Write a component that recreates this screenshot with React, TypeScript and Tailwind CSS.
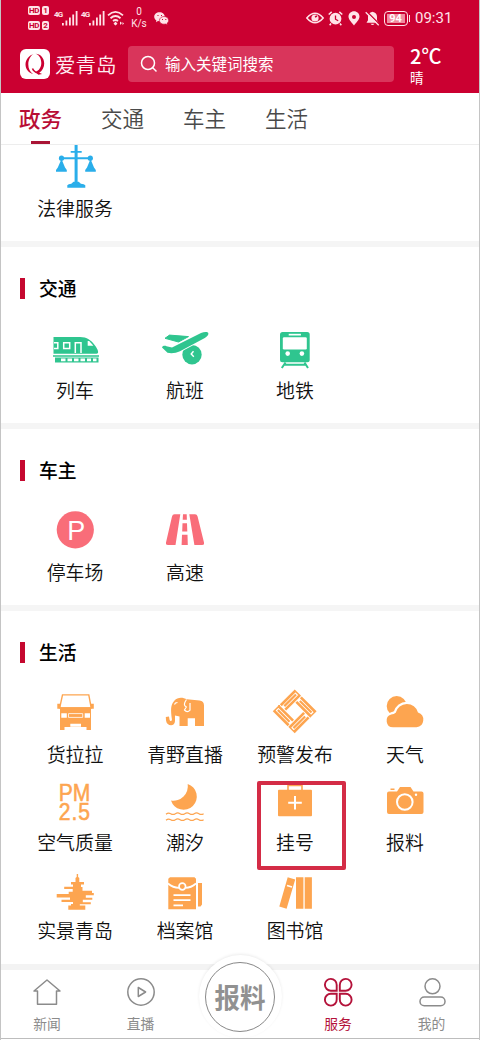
import type { ReactNode } from "react"

const icons: Record<string, ReactNode> = {
  law: (
    <g fill="#2aaeea">
      <path d="M21.600 0h3v38h-3zM17.700 6h11v1.800h-11zM8 12.200h29.500v2H8z" />
      <circle cx="8.500" cy="13.200" r="2.600" />
      <circle cx="37.300" cy="13.200" r="2.600" />
      <path d="M8.500 14l3.500 8.500 1.800 2.500v1.700H3V25l1.800-2.500zM37.500 14l3.500 8.500 1.800 2.500v1.700H32.200V25l1.800-2.500z" />
      <path d="M14.300 42.700v-2.500q1-1.500 4-1.500l2.200-2h5.200l2.200 2q3.400 0 4.400 1.500v2.500z" />
    </g>
  ),
  train: (
    <>
      <path d="M0.500 10H27c7 0 11 3 15 8.500 3 4 4.500 8.200 1.500 8.200H0.500z" fill="#2fc58f" />
      <path d="M34.700 14h1.500l4.200 4.800h-5.700z" fill="#fff" />
      <g fill="none" stroke="#fff" strokeWidth="1.500">
        <path d="M1 15.700h3.800v5.700H1M10.700 15.700h6v5.700h-6zM22.300 26v-10.200h5.700V26" />
      </g>
      <path d="M0 28.300h46v1.500H0zM2 30.500h43.500v5H2z" fill="#2fc58f" />
      <path d="M8 31.500h4.500v2.700H8zM14.500 31.500H19v2.700h-4.500zM21 31.500h4.500v2.700H21zM27.500 31.500H32v2.700h-4.500zM34 31.500h4v2.700h-4zM40 31.500h3.500v2.700H40z" fill="#fff" />
    </>
  ),
  plane: (
    <>
      <path d="M2 11.300l4.500-3.200 19 1.500-10 5.400z" fill="#2fc58f" strokeLinejoin="round" stroke="#2fc58f" />
      <circle cx="29" cy="27.700" r="9.700" fill="#2fc58f" />
      <path d="M30.500 24.300L28.200 27l2.600 2.700" fill="none" stroke="#fff" strokeWidth="1.400" />
      <path d="M-1 20.500c1-2 3-1.800 4.500-1.300l5.500 1.200L38 6c3-1.300 6.500-1.500 7.300 0 .6 1.500-1 3.500-3.500 5L17 24.200c-4 2-9 2.500-12.500 1.500z" fill="#2fc58f" stroke="#fff" strokeWidth="2" paintOrder="stroke" />
    </>
  ),
  metro: (
    <>
      <rect x="7" y="5" width="29.700" height="30.300" rx="2.500" fill="#2fc58f" />
      <path d="M15.700 6.800h12.200v1.700H15.700z" fill="#fff" />
      <rect x="9.800" y="10.300" width="24" height="12.200" rx="1.300" fill="#fff" />
      <circle cx="14.700" cy="26.600" r="2.300" fill="#fff" />
      <circle cx="28.900" cy="26.600" r="2.300" fill="#fff" />
      <path d="M12.500 35.500L8.800 41M31.500 35.500l3.500 5.500M11.500 37.800h21" stroke="#2fc58f" strokeWidth="2" />
    </>
  ),
  parking: (
    <>
      <circle cx="22.300" cy="20.800" r="18.600" fill="#f96d79" />
      <text className="font-['Liberation_Sans',sans-serif] text-[27px]" x="23.200" y="31" textAnchor="middle" fill="#fff">P</text>
    </>
  ),
  road: (
    <g fill="#f96d79">
      <path d="M11.500 5.300h5.800L12.500 36H5q-2.500 0-2-2.500L9 7.500q.5-2.200 2.500-2.200zM26.300 5.300h5.700q2 0 2.600 2.200L41 33.500q.5 2.500-1.800 2.500h-7.800zM20 5.300h3.700l.2 5.500h-4.200zM19.500 14.200h4.500l.3 8.300h-5.100zM19 25.800h5.500l.3 10.200h-6.200z" />
    </g>
  ),
  truck: (
    <>
      <path d="M9.500 3.900h26.300l2.400 13H6.700z" fill="none" stroke="#fda550" strokeWidth="1.400" />
      <path d="M4.300 12.700h3v5h-3zM37.800 12.700h3v5h-3zM7 16.300h31V39h-4.500v-3H11.500v3H7z" fill="#fda550" />
      <path d="M8.300 22.300h5.500v4.400H8.300zM31.700 22.300H37v4.400h-5.300zM17.300 32.700H28v3H17.300z" fill="#fff" />
      <path d="M15.500 22.600h14.200v3.800H15.500z" fill="none" stroke="#fff" strokeWidth=".8" />
    </>
  ),
  elephant: (
    <>
      <path d="M11.500 9.500C14.500 6 19.500 6 24 8.300l12.500 1.200q4.500.4 4.500 5V35h-9v-7.700h-7.300V35H16.500v-9.500l-4.500-1v5.500c0 6-8.500 5.500-9-.8l-.2-3.300 3.200-.5.5 3.200c.4 2.200 2.600 1.800 2.400-.3C7.800 19 7.300 14 11.500 9.500z" fill="#fda550" />
      <path d="M23.500 8.500c-2.800 4-2.800 6-.2 7.500l-1.800 3q2.700 3.200 5.500.2V12" fill="none" stroke="#fff" strokeWidth="1.200" />
      <path d="M11.500 13.500q.5-2 3-2" fill="none" stroke="#fff" strokeWidth="1.100" />
    </>
  ),
  alert: (
    <g transform="rotate(45 21.700 20.300)" fill="#fda550">
      {[0, 90, 180, 270].map((r) => (
        <path key={r} transform={`rotate(${r} 21.700 20.300)`} d="M16.200 4.800h21v2.700h-21zM18 8.200h16.500v2.200H18zM16.200 11.200h21v2.600h-21zM35.700 4.800h1.500v8.800h-1.500z" />
      ))}
    </g>
  ),
  cloud: (
    <>
      <circle cx="13.700" cy="15" r="10" fill="#fda550" />
      <path d="M10 36.300a6.500 6.500 0 0 1-1.800-12.700q2.800-.3 4.500-1.800a11.500 11.500 0 0 1 22.300-.3 7.600 7.600 0 0 1-1.500 14.800z" fill="#fda550" stroke="#fff" strokeWidth="4.500" paintOrder="stroke" />
    </>
  ),
  pm: (
    <g transform="translate(1.500 0) scale(0.960 1.120)" fill="#fda550">
      <text className="font-['Liberation_Sans',sans-serif] text-[22px]" stroke="#fda550" strokeWidth="0.500">
        <tspan x="4.300" y="19.500">PM</tspan>
        <tspan x="4.500" y="36.800" letterSpacing="1">2.5</tspan>
      </text>
    </g>
  ),
  tide: (
    <>
      <path d="M24.700 5A13.200 13.200 0 1 1 8 21.500 14.500 14.500 0 0 0 24.700 5z" fill="#fda550" />
      <path d="M3 35.200q2.300-2 4.700-.5t4.700 0 4.700 0 4.700 0 4.700 0 4.700 0 4.700 0 4.700 0M3 41.200q2.300-2 4.700-.5t4.700 0 4.700 0 4.700 0 4.700 0 4.700 0 4.700 0 4.700 0" fill="none" stroke="#fda550" strokeWidth="1.200" />
    </>
  ),
  medkit: (
    <>
      <path d="M15 11V6.500h14V11" fill="none" stroke="#fda550" strokeWidth="1.600" />
      <rect x="5" y="10.700" width="34" height="26.500" rx="1" fill="#fda550" />
      <path d="M22 17v13.500M15.200 23.800h13.600" stroke="#fff" strokeWidth="2" />
    </>
  ),
  camera: (
    <>
      <path d="M6 12.500h8l3-4.500h10.500l3 4.500h8q2 0 2 2V33q0 2-2 2H6q-2 0-2-2V14.500q0-2 2-2zM7.500 9.400h4v1.500h-4z" fill="#fda550" />
      <circle cx="21.800" cy="23" r="7.800" fill="none" stroke="#fff" strokeWidth="2" />
      <circle cx="33" cy="15.800" r="1.200" fill="#fff" />
    </>
  ),
  tower: (
    <path d="M23.700 7h1.400v3l1.200 1v4h4.700v2.500h-3v2.500h1.500v3.800h9.500v2.200h1.800v2.300h-8v2.500h6.500v2h-9.500v2.500h8v2h-11v1.200h5.500v4.300H15.300v-4.300H18v-1.500h2v-2H8.500v-2.300H17v-2.200H3.700V27h12v-2.300h4V22h-8.500v-2.300H20v-2.200h-2V15h4.500v-4l1.200-1z" fill="#fda550" />
  ),
  archive: (
    <>
      <path d="M7 10.300h24.500l1.500 1.500v30.500H5.300V11.800zM35 16h4v21.500L37.500 39.500H35z" fill="#fda550" />
      <path d="M5 16.500q5 4.300 11 4.300M33 16.500q-5 4.300-10.500 4.300" fill="none" stroke="#fff" strokeWidth="1.700" />
      <circle cx="19.300" cy="19.500" r="3.300" fill="#fda550" stroke="#fff" strokeWidth="1.700" />
      <path d="M10.500 28.200h17M10.500 33.200h17M10.500 38.300h9.500" stroke="#fff" strokeWidth="1.700" />
    </>
  ),
  books: (
    <>
      <path d="M14.700 10.300l7.500 2.300-8.600 29.200-7.300-2.200zM23 10.300h7.400v31.500H23zM31.700 10.300h7.200v31.500h-7.200z" fill="#fda550" />
      <path d="M14 18.500l5 1.500" stroke="#fff" strokeWidth="1.800" />
    </>
  ),
}

const tabs = ["政务", "交通", "车主", "生活"]

function Item({ icon, label }: { icon: string; label: string }) {
  return (
    <div className="flex flex-col items-center">
      <svg className="h-11 w-11 overflow-visible" viewBox="0 0 44 44">{icons[icon]}</svg>
      <span className="mt-[5px] mb-px h-7 text-[18.900px] leading-7 font-[350] whitespace-nowrap text-[#111]">{label}</span>
    </div>
  )
}

function SectionTitle({ title }: { title: string }) {
  return (
    <h2 className="flex h-7 items-center gap-3.5 text-[18.800px] font-medium text-black">
      <span className="-mt-0.5 h-[21px] w-[5px] bg-[#c5082f]" />
      <span className="-mt-px">{title}</span>
    </h2>
  )
}

function Section({ title, children }: { title: string; children: ReactNode }) {
  return (
    <section className="h-[182px] shrink-0 border-b-[6px] border-[#f5f5f5] px-[19px] pt-7">
      <SectionTitle title={title} />
      <div className="mt-6 grid grid-cols-4">{children}</div>
    </section>
  )
}

function Signal() {
  return (
    <div className="flex items-start">
      <span className="w-[8px] text-[8px] leading-[7px] font-bold tracking-[-0.800px]">4G</span>
      <svg className="h-[15px] w-4" viewBox="0 0 16 15" fill="currentColor">
        <path d="M0 12h1.800v2.500H0zM3.500 9.500h1.800v5H3.500zM7 6.500h1.800v8H7zM10.300 3.500h1.800v11h-1.800zM13.700 0h1.800v14.500h-1.800z" />
      </svg>
    </div>
  )
}

function StatusBar() {
  return (
    <div className="flex h-9 items-center pl-[27px] text-[#ffe3e8]">
      <div className="flex flex-col gap-1.5">
        {["1", "2"].map((n) => (
          <div key={n} className="flex gap-0.5 text-[8px] leading-[9px] font-bold text-[#cb0031]">
            <span className="w-3 rounded-xs bg-[#ffe3e8] text-center tracking-tighter">HD</span>
            <span className="w-[7px] rounded-xs bg-[#ffe3e8] text-center">{n}</span>
          </div>
        ))}
      </div>
      <div className="ml-[5px] flex gap-[3px]">
        <Signal />
        <Signal />
      </div>
      <svg className="ml-[2px] h-4 w-[18px]" viewBox="0 0 18 16" fill="none" stroke="currentColor" strokeWidth="1.800">
        <path d="M1 5.300Q8.500-1.500 16 5.300M3.500 8.200q5-4.300 10 0M6 11q2.500-2 5 0" />
        <path d="M8.500 11.500l2 2.300-2 1.700-2-1.700zM13 11.500l2 1.500-2 2zM15.500 12l1.500 1.500-1.500 1.500z" fill="currentColor" stroke="none" />
      </svg>
      <div className="ml-[6px] w-4 text-center text-[10px] leading-3">
        <div>0</div>
        <div className="-mx-1">K/s</div>
      </div>
      <svg className="ml-[7px] h-[13px] w-[15px]" viewBox="0 0 15 13">
        <path d="M5.500.3c3 0 5.300 2 5.300 4.500S8.500 9.300 5.500 9.300l-1.500-.2-2 1.200.4-1.900C1 7.600.2 6.300.2 4.800.2 2.300 2.500.3 5.500.3z" fill="currentColor" />
        <path d="M10 4.500c2.600 0 4.600 1.700 4.600 3.900 0 1.200-.6 2.200-1.600 2.900l.3 1.500-1.700-.8-1.600.2c-2.600 0-4.600-1.700-4.600-3.800s2-3.900 4.600-3.900z" fill="currentColor" stroke="#cb0031" strokeWidth=".6" />
        <path d="M3.500 3h1v1h-1zM7 3h1v1H7zM8 7h1v1H8zM11.300 7h1v1h-1z" fill="#cb0031" />
      </svg>
      <div className="ml-auto flex items-center pr-[26px]">
        <svg className="h-3.5 w-[18px]" viewBox="0 0 18 14" fill="none" stroke="currentColor" strokeWidth="1.500">
          <path d="M.8 7Q9-2.500 17.200 7 9 16.500.8 7z" />
          <circle cx="9" cy="7" r="3.600" fill="currentColor" stroke="none" />
          <path d="M9 6l2-1" stroke="#cb0031" />
        </svg>
        <svg className="ml-1 h-[15px] w-[15px]" viewBox="0 0 15 15">
          <circle cx="7.500" cy="7.700" r="5.900" fill="currentColor" />
          <path d="M.7 3.500L3.700.9M14.300 3.500l-3-2.600M3 12.500l-1.300 1.700M12 12.500l1.300 1.700" stroke="currentColor" strokeWidth="1.500" />
          <path d="M7.500 4.500v3.700l2.700 1.500" fill="none" stroke="#cb0031" strokeWidth="1.300" />
        </svg>
        <svg className="ml-[5px] h-[15px] w-3" viewBox="0 0 12 15">
          <path d="M6 .3c3 0 5.500 2.300 5.500 5.300C11.500 9 7.700 12 6 14.500 4.300 12 .5 9 .5 5.600.5 2.600 3 .3 6 .3zM6 4a2 2 0 1 0 0 4 2 2 0 0 0 0-4z" fill="currentColor" fillRule="evenodd" />
        </svg>
        <svg className="ml-[5px] h-[15px] w-[15px]" viewBox="0 0 15 15">
          <path d="M7.500.8c3 .5 4.500 2.500 4.500 5v3.500l1.500 2.400h-12L3 9.300V5.800c0-2.500 1.500-4.500 4.500-5zM5.500 12.700h4q-2 2.500-4 0z" fill="currentColor" />
          <path d="M1.800.5l13 13" stroke="#cb0031" strokeWidth="1.300" />
          <path d="M.7 1.200l13 13" stroke="currentColor" strokeWidth="1.300" />
        </svg>
        <div className="ml-1 flex h-[15px] w-6 items-center justify-center rounded-[4px] border-[1.500px] border-current">
          <span className="h-[9px] w-[18px] bg-[#f08ba0] text-center text-[11px] leading-[10px] font-semibold text-white">94</span>
        </div>
        <span className="ml-px h-[7px] w-[1.500px] bg-current" />
        <span className="ml-[5px] w-[38px] text-[15px] leading-5">09:31</span>
      </div>
    </div>
  )
}

function Header() {
  return (
    <header className="h-[93px] shrink-0 bg-[#cb0031] font-[Roboto,'Noto_Sans_CJK_SC',sans-serif]">
      <StatusBar />
      <div className="mt-2.5 flex h-9 items-center pl-[19px] font-['Noto_Sans_CJK_SC',sans-serif]">
        <svg className="h-[30px] w-[30px]" viewBox="0 0 30 30">
          <rect width="30" height="30" rx="6" fill="#fff" />
          <path d="M13.500 5C9 6.500 5.500 10.500 5.500 15.500c0 5 3.700 8.700 7.500 9.300-3-1.800-4.700-5-4.700-9.300 0-4.500 2-8.500 5.200-10.500zM15.500 4.700c4.700 0 8.700 4 8.700 9.800 0 3.700-1.800 7.200-4.900 9.300l2.800 1.200-3.800.7-2.800-2.700c3.500-1.500 5.800-4.700 5.800-9 0-4.200-2-8.200-5.800-9.300z" fill="#cb0031" />
          <path d="M12.500 19.500c.7 2 2.500 3.700 5.500 4.500" fill="none" stroke="#cb0031" strokeWidth="1.500" />
        </svg>
        <span className="ml-[5px] w-[62px] text-[20.500px] font-[350] whitespace-nowrap text-[#ffeef1]">爱青岛</span>
        <div className="ml-[11px] flex h-9 w-[266px] items-center rounded-sm bg-[#d9355b] pl-3 text-white">
          <svg className="h-[18px] w-[18px]" viewBox="0 0 18 18" fill="none" stroke="currentColor" strokeWidth="1.500">
            <circle cx="8" cy="8" r="6.500" />
            <path d="M12.500 12.500l4 4" />
          </svg>
          <span className="ml-[7px] text-[15.500px]">输入关键词搜索</span>
        </div>
        <div className="mt-[3px] ml-4 text-white">
          <div className="h-[22px] text-[20px] leading-[22px] font-medium">2℃</div>
          <div className="text-[13.500px] leading-5">晴</div>
        </div>
      </div>
    </header>
  )
}

function NavItem({ label, active, children }: { label: string; active?: boolean; children: ReactNode }) {
  return (
    <div className={active ? "flex flex-col items-center text-[#b4123a]" : "flex flex-col items-center text-[#8b8b8b]"}>
      <svg className="mt-[7px] h-[30px] w-[30px]" viewBox="0 0 30 30" fill="none" stroke="currentColor" strokeWidth="1.500">{children}</svg>
      <span className="mt-1.5 text-[13.800px] leading-5">{label}</span>
    </div>
  )
}

function BottomNav() {
  return (
    <nav className="grid h-[69px] shrink-0 grid-cols-[92px_95px_104px_92px_95px] border-b border-[#bdbdbd] bg-white">
      <NavItem label="新闻">
        <path d="M15 3L2 14h3.500v13.200h19V14H28z" strokeLinejoin="round" />
      </NavItem>
      <NavItem label="直播">
        <circle cx="15" cy="15" r="13.200" />
        <path d="M12.300 10.500v9l7.300-4.500z" strokeLinejoin="round" />
      </NavItem>
      <div className="flex justify-center">
        <div className="-mt-[15px] flex h-[83px] w-[83px] shrink-0 items-center justify-center rounded-full bg-white shadow-[0_-1px_3px_rgba(0,0,0,0.080)]">
          <div className="flex h-[70px] w-[70px] items-center justify-center rounded-full border border-[#888]">
            <span className="scale-y-105 text-[25.500px] font-bold text-[#919191]">报料</span>
          </div>
        </div>
      </div>
      <NavItem label="服务" active>
        <g strokeWidth="1.900">
          <path d="M13.700 13.700V7.900A5.900 5.900 0 1 0 7.900 13.700zM16.800 13.700V7.900a5.900 5.900 0 1 1 5.800 5.800zM13.700 16.800v5.700a5.900 5.900 0 1 1-5.800-5.700zM16.800 16.800v5.700a5.900 5.900 0 1 0 5.800-5.700z" />
        </g>
      </NavItem>
      <NavItem label="我的">
        <circle cx="15.500" cy="9.300" r="7.500" />
        <rect x="3" y="20" width="25" height="8.700" rx="4.300" />
      </NavItem>
    </nav>
  )
}

export default function App() {
  return (
    <div className="flex h-[1040px] w-[480px] flex-col overflow-hidden border-x border-[#c4c4c4] bg-white font-['Noto_Sans_CJK_SC',sans-serif]">
      <Header />
      <div className="flex h-[52px] shrink-0 gap-[39px] border-b border-[#ededed] pl-[18px] text-[21.500px] text-[#4a4a4a]">
        {tabs.map((tab, i) => (
          <div key={tab} className={i === 0 ? "flex w-[43px] flex-col items-center font-medium text-[#b80d35]" : "flex w-[43px] flex-col items-center font-[350]"}>
            <span className="h-12 leading-[50px] whitespace-nowrap">{tab}</span>
            {i === 0 && <span className="h-[3px] w-[19px] bg-[#a91435]" />}
          </div>
        ))}
      </div>

      <section className="h-[102px] shrink-0 border-b-[6px] border-[#f5f5f5] px-[19px]">
        <div className="grid grid-cols-4">
          <Item icon="law" label="法律服务" />
        </div>
      </section>

      <Section title="交通">
        <Item icon="train" label="列车" />
        <Item icon="plane" label="航班" />
        <Item icon="metro" label="地铁" />
      </Section>

      <Section title="车主">
        <Item icon="parking" label="停车场" />
        <Item icon="road" label="高速" />
      </Section>

      <section className="h-[359px] shrink-0 border-b-[6px] border-[#f3f3f3] px-[19px] pt-7">
        <SectionTitle title="生活" />
        <div className="mt-6 grid grid-cols-4 gap-y-2.5">
          <Item icon="truck" label="货拉拉" />
          <Item icon="elephant" label="青野直播" />
          <Item icon="alert" label="预警发布" />
          <Item icon="cloud" label="天气" />
          <Item icon="pm" label="空气质量" />
          <Item icon="tide" label="潮汐" />
          <div className="relative">
            <Item icon="medkit" label="挂号" />
            <div className="absolute top-0.5 left-[17px] h-[89px] w-[89px] rounded-xs border-4 border-[#d42c46]" />
          </div>
          <Item icon="camera" label="报料" />
          <Item icon="tower" label="实景青岛" />
          <Item icon="archive" label="档案馆" />
          <Item icon="books" label="图书馆" />
        </div>
      </section>

      <BottomNav />
    </div>
  )
}
